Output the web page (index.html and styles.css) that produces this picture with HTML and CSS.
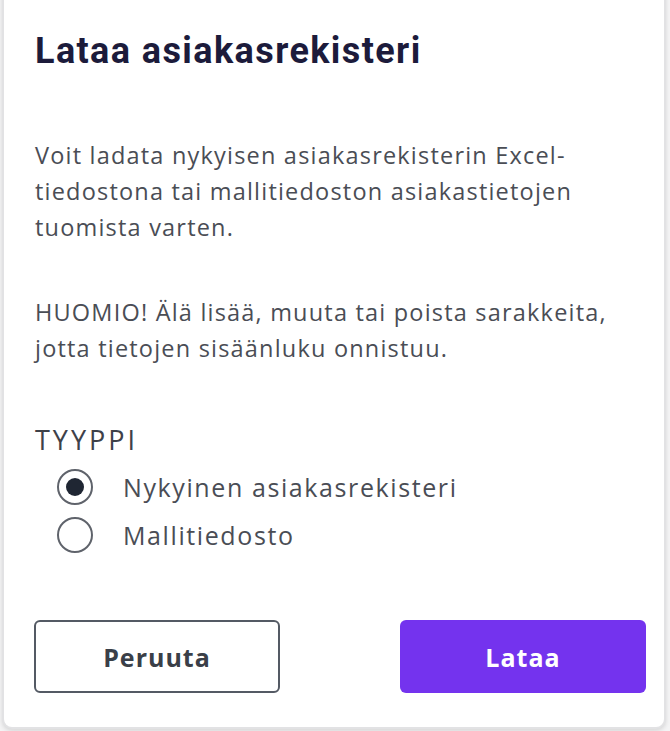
FILE: index.html
```html
<!DOCTYPE html>
<html lang="fi">
<head>
<meta charset="utf-8">
<link rel="stylesheet" href="styles.css">
</head>
<body>
<div class="page">
  <div class="dialog">
    <h1 class="title">Lataa asiakasrekisteri</h1>
    <div class="content">
      <p class="text">Voit ladata nykyisen asiakasrekisterin Excel-<br>tiedostona tai mallitiedoston asiakastietojen<br>tuomista varten.</p>
      <p class="text">HUOMIO! Älä lisää, muuta tai poista sarakkeita,<br>jotta tietojen sisäänluku onnistuu.</p>
      <div class="group">
        <div class="label">TYYPPI</div>
        <label class="radio"><span class="dot checked"></span><span>Nykyinen asiakasrekisteri</span></label>
        <label class="radio"><span class="dot"></span><span>Mallitiedosto</span></label>
      </div>
    </div>
    <div class="actions">
      <button class="btn btn-outline">Peruuta</button>
      <button class="btn btn-primary">Lataa</button>
    </div>
  </div>
</div>
</body>
</html>
```
FILE: styles.css
```css
* { box-sizing: border-box; }
html, body { margin: 0; padding: 0; }
body {
  width: 670px;
  height: 731px;
  overflow: hidden;
  background: #f4f4f5;
  font-family: "Open Sans", "Liberation Sans", sans-serif;
}
.page {
  display: flex;
  flex-direction: column;
  height: 731px;
}
.dialog {
  margin: -10px 4px 0 2px;
  height: 739px;
  background: #fff;
  border: 2px solid #e2e2e4;
  border-top: none;
  border-radius: 0 0 10px 10px;
  box-shadow: 0 2px 4px rgba(0,0,0,0.12);
  padding: 39px 20px 0 31px;
  display: flex;
  flex-direction: column;
}
.title {
  margin: 0;
  font-family: Roboto, "Liberation Sans", sans-serif;
  font-size: 36px;
  line-height: 44px;
  font-weight: 700;
  color: #1c1b3b;
  letter-spacing: 1.4px;
}
.content {
  padding-top: 64px;
}
.text {
  margin: 0 0 49px 0;
  font-size: 23.5px;
  line-height: 36px;
  color: #4a4d55;
  letter-spacing: 1.2px;
}
.group {
  padding-top: 7px;
  display: flex;
  flex-direction: column;
}
.label {
  font-size: 27px;
  line-height: 36px;
  color: #3e4149;
  margin-bottom: 5px;
  letter-spacing: 3px;
}
.radio {
  display: flex;
  align-items: center;
  gap: 30px;
  height: 48px;
  padding-left: 22px;
  font-size: 25px;
  color: #4a4d55;
  letter-spacing: 1.6px;
}
.dot {
  width: 36px;
  height: 36px;
  border-radius: 50%;
  border: 2px solid #5f636b;
  display: flex;
  align-items: center;
  justify-content: center;
}
.dot.checked::after {
  content: "";
  width: 18px;
  height: 18px;
  border-radius: 50%;
  background: #1f2633;
}
.actions {
  margin-top: 61px;
  display: flex;
  justify-content: space-between;
  margin-right: -2px;
}
.btn {
  width: 246px;
  height: 73px;
  border-radius: 6px;
  font-family: inherit;
  font-size: 25px;
  font-weight: 700;
  letter-spacing: 1px;
}
.btn-outline {
  margin-left: -1px;
  background: #fff;
  border: 2px solid #545a64;
  color: #3a3f48;
}
.btn-primary {
  background: #7433ee;
  border: none;
  color: #fff;
}
```
